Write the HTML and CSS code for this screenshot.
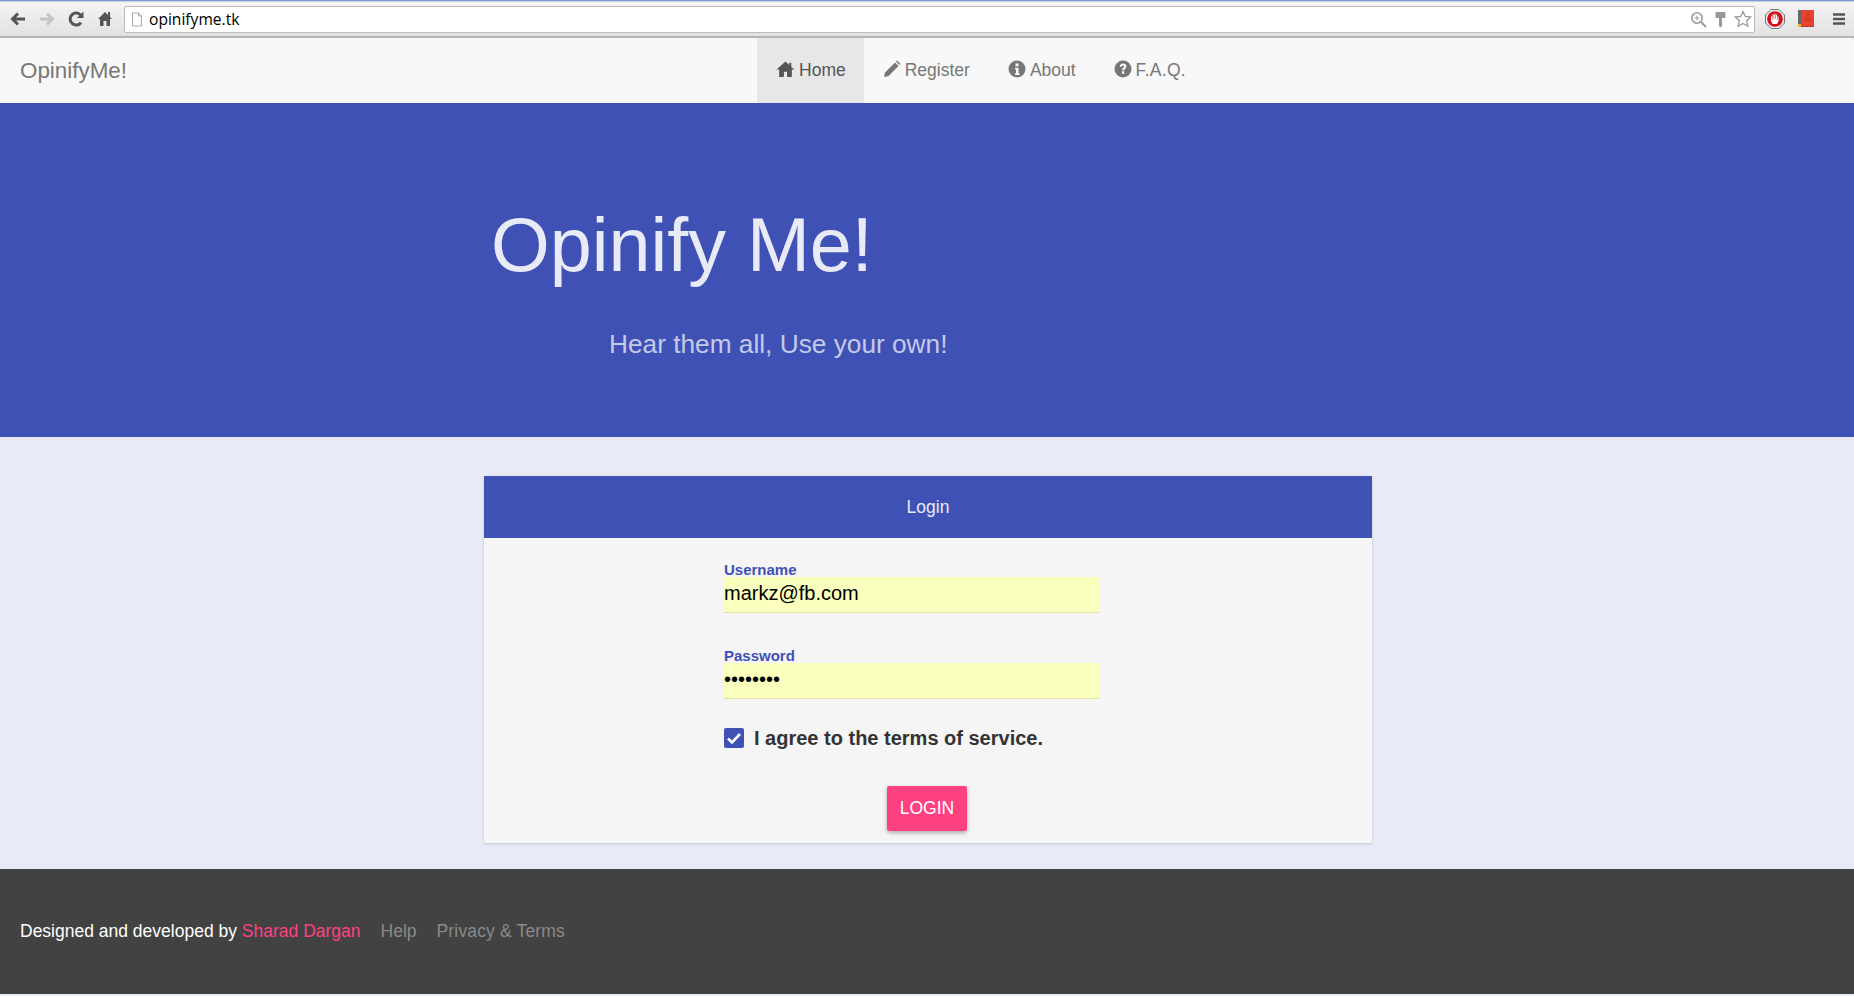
FILE: index.html
```html
<!DOCTYPE html>
<html lang="en">
<head>
<meta charset="utf-8">
<title>OpinifyMe!</title>
<link rel="stylesheet" href="styles.css">
</head>
<body>
<div class="tabstrip"><span class="tabline"></span></div>
<div class="chrome">
  <svg class="cicon" width="20" height="20" viewBox="0 0 20 20"><path d="M17 10H5M10 4.500L4.500 10l5.500 5.500" fill="none" stroke="#555" stroke-width="3"/></svg>
  <svg class="cicon" width="20" height="20" viewBox="0 0 20 20"><path d="M3 10h12M10 4.500l5.500 5.500-5.500 5.500" fill="none" stroke="#c4c4c4" stroke-width="3"/></svg>
  <svg class="cicon" width="20" height="20" viewBox="0 0 20 20"><path d="M15 13.500A6 6 0 1 1 15 6.500" fill="none" stroke="#555" stroke-width="3"/><path d="M11 9h6.500V2.500z" fill="#555"/></svg>
  <svg class="cicon" width="20" height="20" viewBox="0 0 20 20"><path d="M10 3L3 10h2v7h3.500v-5h3v5H15v-7h2l-2-2V3h-2v3z" fill="#555"/></svg>
  <div class="omnibox">
    <svg width="12" height="15" viewBox="0 0 12 15"><path d="M1.500 1h6l3 3v10h-9z" fill="#fff" stroke="#aaa"/><path d="M7.500 1v3h3" fill="none" stroke="#aaa"/></svg>
    <span class="url">opinifyme.tk</span>
    <span class="omni-right">
      <svg width="17" height="17" viewBox="0 0 17 17"><circle cx="7" cy="7" r="5.200" fill="none" stroke="#999" stroke-width="1.600"/><path d="M11 11l5 5" stroke="#999" stroke-width="2"/><path d="M7 4.500v5M4.500 7h5" stroke="#999"/></svg>
      <svg width="11" height="17" viewBox="0 0 11 17"><path d="M1.500 1h8a1 1 0 0 1 1 1v4a1 1 0 0 1-1 1H7v8l-1.500 1.500L4 15V7H1.500a1 1 0 0 1-1-1V2a1 1 0 0 1 1-1z" fill="#999"/></svg>
      <svg width="18" height="18" viewBox="0 0 18 18"><path d="M9 1.500l2.300 5 5.400.6-4 3.700 1.100 5.400L9 13.500l-4.800 2.700 1.100-5.400-4-3.700 5.400-.6z" fill="#fff" stroke="#999" stroke-width="1.300"/></svg>
    </span>
  </div>
  <svg class="ext-stop" width="20" height="20" viewBox="0 0 20 20"><path d="M6 .5h8L19.500 6v8L14 19.500H6L.5 14V6z" fill="#e8e8e8" stroke="#777"/><circle cx="10" cy="10" r="7.800" fill="#d3101a"/><path d="M6 7.500h1V11h.5V5.500h1.200V10h.5V4.800h1.200V10h.5V5.500h1.200V11h.5V7.500h1V12l-1.600 3H7.600L6 12z" fill="#fff"/></svg>
  <svg class="ext-book" width="16" height="20" viewBox="0 0 16 20"><path d="M0 1h3v17H0z" fill="#666"/><path d="M3 1h13v16H3z" fill="#e5432f"/><path d="M3 17h13v1H3z" fill="#b33"/><path d="M0 15h3v3H0z" fill="#e5b62b"/><path d="M7 13l2.500-8h1L13 13M8 10.500h4" fill="none" stroke="#c93426"/></svg>
  <svg class="menu" width="14" height="14" viewBox="0 0 14 14"><path d="M1 2.500h12M1 7h12M1 11.500h12" stroke="#555" stroke-width="2.400"/></svg>
</div>

<nav class="navbar">
  <a class="brand">OpinifyMe!</a>
  <ul class="navlist">
    <li class="navitem active"><svg class="glyph" width="19" height="18" viewBox="0 0 18 16"><path d="M9 1L0.500 8.500h2.500V15.500h4.500v-5h3v5H15V8.500h2.500L14.500 6V2h-2v2.200z" fill="currentColor"/></svg><span class="home-label">Home</span></li>
    <li class="navitem"><svg class="glyph" width="18" height="18" viewBox="0 0 18 18"><path d="M1 17l1-4.500L12 2.500l3.500 3.500L5.500 16zM13 1.500l1-1 3.500 3.500-1 1z" fill="currentColor"/></svg>Register</li>
    <li class="navitem"><svg class="glyph" width="18" height="18" viewBox="0 0 18 18"><circle cx="9" cy="9" r="8.500" fill="currentColor"/><path d="M7.500 3.500h3v2.800h-3zM7 7.800h3.500v5.500h1V15H7v-1.700h1v-3.800H7z" fill="#f8f8f8"/></svg>About</li>
    <li class="navitem"><svg class="glyph" width="18" height="18" viewBox="0 0 18 18"><circle cx="9" cy="9" r="8.500" fill="currentColor"/><path d="M5.800 6.800C5.800 4.600 7.400 3.500 9.200 3.500c1.900 0 3.200 1.200 3.200 2.800 0 2.200-2.100 2.300-2.100 3.900H8c0-2.400 2.100-2.700 2.100-3.800 0-.5-.4-.9-1-.9-.6 0-1 .4-1.200 1.100zM8 11.300h2.300v2.500H8z" fill="#f8f8f8"/></svg><span class="faq">F.A.Q.</span></li>
  </ul>
</nav>

<header class="hero">
  <h1 class="hero-title">Opinify Me!</h1>
  <p class="hero-sub">Hear them all, Use your own!</p>
</header>

<main class="content">
  <section class="card">
    <div class="card-head">Login</div>
    <form class="card-body">
      <div class="field">
        <label class="field-label">Username</label>
        <div class="field-input">markz@fb.com</div>
      </div>
      <div class="field">
        <label class="field-label">Password</label>
        <div class="field-input">••••••••</div>
      </div>
      <div class="agree">
        <span class="check"><svg width="20" height="20" viewBox="0 0 20 20"><path d="M4 10.500l4 4 8-8.500" fill="none" stroke="#fff" stroke-width="2.600"/></svg></span>
        <span>I agree to the terms of service.</span>
      </div>
      <div class="actions"><span class="btn">LOGIN</span></div>
    </form>
  </section>
</main>

<footer class="footer">
  <span class="credit">Designed and developed by <a class="pink">Sharad Dargan</a></span>
  <a class="flink">Help</a>
  <a class="flink terms">Privacy &amp; Terms</a>
</footer>
</body>
</html>
```
FILE: styles.css
```css
* { box-sizing: border-box; }
html, body { margin: 0; padding: 0; }
body {
  height: 996px;
  overflow: hidden;
  background: #e8eaf6;
  font-family: "Liberation Sans", Arial, sans-serif;
  display: flex;
  flex-direction: column;
}
.tabstrip { height: 2px; background: #c3d0e6; flex: none; display: flex; }
.tabline { display: block; width: 100%; height: 1px; background: #7d9bd0; }
.chrome {
  height: 36px;
  flex: none;
  display: flex;
  align-items: center;
  padding: 0 8px;
  gap: 9px;
  background: linear-gradient(#f4f4f4, #e2e2e2);
  border-bottom: 2px solid #b5b5b5;
}
.cicon { flex: none; }
.omnibox {
  flex: 1;
  height: 27px;
  margin-right: 1px;
  background: #fff;
  border: 1px solid #bbb;
  border-radius: 2px;
  display: flex;
  align-items: center;
  gap: 6px;
  padding: 0 2px 0 6px;
}
.url { font-family: "Open Sans", sans-serif; font-size: 15.600px; color: #000; }
.omni-right { margin-left: auto; display: flex; align-items: center; gap: 8px; }
.ext-stop { flex: none; }
.ext-book { flex: none; margin-left: 4px; }
.menu { flex: none; margin-left: 9px; }

.navbar {
  height: 65px;
  flex: none;
  background: #f8f8f8;
  display: flex;
  border-radius: 4px 4px 0 0;
}
.brand { font-size: 22.400px; color: #777; padding: 0 20px; line-height: 65px; }
.navlist {
  list-style: none;
  margin: 0 0 0 610px;
  padding: 0;
  display: flex;
}
.navitem {
  display: flex;
  align-items: center;
  gap: 4px;
  padding: 0 19px;
  font-size: 17.500px;
  color: #777;
  white-space: nowrap;
}
.navitem.active { background: #e7e7e7; color: #555; }
.glyph { flex: none; margin-top: -3px; }
.home-label { margin-right: -1px; }
.faq { letter-spacing: .3px; }

.hero {
  height: 334px;
  flex: none;
  background: #3f51b5;
  padding: 102px 0 0 491px;
}
.hero-title {
  margin: 0;
  font-weight: 400;
  font-size: 75.500px;
  line-height: 80px;
  color: #e8eaf6;
}
.hero-sub {
  margin: 39px 0 0 118px;
  font-size: 26.250px;
  line-height: 40px;
  color: #c5cae9;
}
.content {
  height: 432px;
  flex: none;
  padding: 39px 0 0 484px;
}
.card {
  width: 888px;
  height: 367px;
  background: #f5f5f5;
  border-radius: 2px;
  box-shadow: 0 1px 3px rgba(0,0,0,.15);
}
.card-head {
  height: 62px;
  background: #3f51b5;
  color: #e8eaf6;
  font-size: 17.500px;
  display: flex;
  align-items: center;
  justify-content: center;
}
.card-body { padding: 21px 0 0 240px; }
.field { width: 375px; margin-bottom: 32px; }
.field-label {
  display: block;
  height: 18px;
  font-size: 15px;
  line-height: 21px;
  font-weight: 700;
  color: #3f51b5;
}
.field-input {
  height: 36px;
  background: #faffbd;
  border-bottom: 1px solid #e0e0a0;
  font-size: 20px;
  line-height: 33px;
  color: #000;
}
.agree {
  display: flex;
  align-items: center;
  gap: 10px;
  font-size: 20px;
  font-weight: 700;
  color: #333;
  height: 24px;
  margin-top: -5px;
}
.check {
  width: 20px;
  height: 20px;
  border-radius: 2px;
  background: #3f51b5;
  display: flex;
  align-items: center;
  justify-content: center;
}
.actions { margin: 36px 0 0 163px; }
.btn {
  display: inline-flex;
  align-items: center;
  justify-content: center;
  width: 80px;
  height: 45px;
  background: #ff4081;
  color: #fff;
  font-size: 17.500px;
  border-radius: 2px;
  box-shadow: 0 2px 4px rgba(0,0,0,.3);
}
.footer {
  height: 125px;
  flex: none;
  background: #424242;
  display: flex;
  align-items: center;
  padding: 0 20px;
  gap: 20px;
  font-size: 17.500px;
  color: #fff;
}
.pink { color: #ff4081; }
.flink { color: #8a8a8a; }
.terms { letter-spacing: .15px; }
```
